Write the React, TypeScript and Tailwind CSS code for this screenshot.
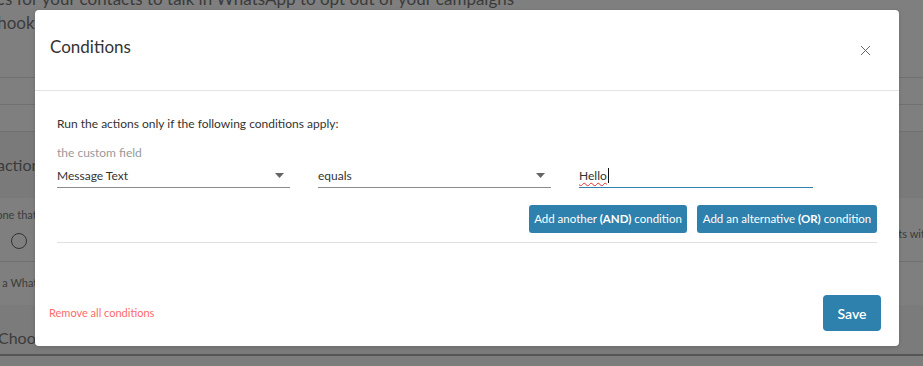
import React from "react";
import { X } from "lucide-react";

const font = { fontFamily: '"Source Sans Pro", Lato, "Liberation Sans", sans-serif' };

const Caret = () => (
  <svg width="9" height="5" viewBox="0 0 9 5" className="shrink-0">
    <path d="M0 0h9L4.5 5z" fill="#666" />
  </svg>
);

const Select = ({ value }: { value: string }) => (
  <div className="flex h-[24px] w-[233px] items-center justify-between border-b border-[#8c8c8c] pr-[6px] text-[12px] text-[#333]">
    <span>{value}</span>
    <Caret />
  </div>
);

const Background = () => (
  <div className="flex h-[366px] w-[923px] flex-col overflow-hidden bg-[#7f7f7f] text-[#3b3b3b]">
    <div className="h-[78px] border-b border-[#707070]">
      <div className="-mt-[13px] ml-[-4px] whitespace-nowrap text-[17px] leading-[24px]">
        es for your contacts to talk in WhatsApp to opt out of your campaigns
      </div>
      <div className="ml-[-38px] text-[17px] leading-[24px]">Webhook</div>
    </div>
    <div className="h-[27px] border-b border-[#707070]" />
    <div className="h-[27px] border-b border-[#707070]" />
    <div className="flex h-[66px] items-center bg-[#7a7a7a]">
      <span className="ml-[-24px] whitespace-nowrap text-[16px]">an action</span>
    </div>
    <div className="flex h-[64px] justify-between border-b border-[#707070]">
      <div className="flex flex-col pt-[10px]">
        <span className="ml-[-14px] whitespace-nowrap text-[11px] leading-[14px]">is one that</span>
        <span className="ml-[11px] mt-[11px] h-[16px] w-[16px] rounded-full border-[1.5px] border-[#333]" />
      </div>
      <span className="mr-[-8px] mt-[28px] whitespace-nowrap text-[11px]">ts with</span>
    </div>
    <div className="flex h-[43px] items-center">
      <span className="ml-[-15px] whitespace-nowrap text-[11px]">ing a WhatsApp</span>
    </div>
    <div className="flex h-[51px] items-end border-b-2 border-[#555] bg-[#7b7b7b] pb-[4px]">
      <span className="ml-[-2px] whitespace-nowrap text-[16px]">Choose an action</span>
    </div>
    <div className="flex-1 bg-[#7d7d7d]" />
  </div>
);

export default function App() {
  return (
    <div className="relative h-[366px] w-[923px] overflow-hidden" style={font}>
      <Background />
      <div className="absolute left-[35px] top-[10px] flex h-[336px] w-[864px] flex-col rounded-[4px] bg-white shadow-[0_1px_4px_rgba(0,0,0,0.15)]">
        <div className="flex h-[81px] items-center justify-between border-b border-[#e3e3e3] pl-[15px] pr-[25px]">
          <h2 className="mt-[-6px] text-[17px] text-[#333]">Conditions</h2>
          <X size={17} strokeWidth={1.4} className="text-[#666]" />
        </div>
        <div className="px-[22px] pt-[24px]">
          <p className="text-[12px] leading-[18px] text-[#333]">Run the actions only if the following conditions apply:</p>
          <p className="mt-[11px] text-[12px] leading-[18px] text-[#999]">the custom field</p>
          <div className="mt-[2px] flex gap-[28px]">
            <Select value="Message Text" />
            <Select value="equals" />
            <div className="flex h-[24px] w-[234px] items-center border-b border-[#2e80ad] text-[12px] text-[#333]">
              <span className="underline decoration-[#e03030] decoration-wavy decoration-[1px] underline-offset-[2px]">Hello</span>
              <span className="ml-[1px] h-[15px] w-[1px] bg-[#111]" />
            </div>
          </div>
          <div className="mt-[17px] flex justify-end gap-[10px] border-b border-[#e0e0e0] pb-[9px]">
            <button className="h-[28px] w-[158px] whitespace-nowrap rounded-[3px] bg-[#2e80ad] text-[11.5px] text-white">
              Add another <b>(AND)</b> condition
            </button>
            <button className="h-[28px] w-[180px] whitespace-nowrap rounded-[3px] bg-[#2e80ad] text-[11.5px] text-white">
              Add an alternative <b>(OR)</b> condition
            </button>
          </div>
        </div>
        <div className="mt-auto flex items-center justify-between pb-[15px] pl-[14px] pr-[18px]">
          <span className="text-[11px] text-[#ff6b6b]">Remove all conditions</span>
          <button className="h-[36px] w-[58px] rounded-[4px] bg-[#2e80ad] text-[14px] font-semibold text-white">Save</button>
        </div>
      </div>
    </div>
  );
}
